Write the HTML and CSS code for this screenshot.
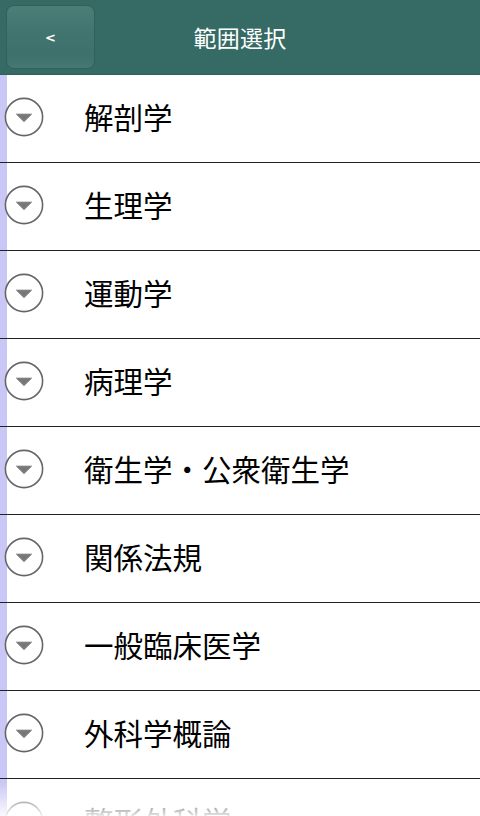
FILE: index.html
```html
<!DOCTYPE html>
<html lang="ja">
<head>
<meta charset="utf-8">
<title>範囲選択</title>
<link rel="stylesheet" href="styles.css">
</head>
<body>
<header class="topbar">
  <button class="back">&lt;</button>
  <h1 class="title">範囲選択</h1>
  <span></span>
</header>
<ul class="list">
  <li class="row"><svg class="ico" viewBox="0 0 40 40" width="40" height="40"><circle cx="20" cy="20" r="18.6" fill="#fff" stroke="#666" stroke-width="1.6"/><path d="M12.5 17.2 H27.5 L20 24.6 Z" fill="#777" stroke="#777" stroke-width="1" stroke-linejoin="round"/></svg><span class="label">解剖学</span></li>
  <li class="row"><svg class="ico" viewBox="0 0 40 40" width="40" height="40"><circle cx="20" cy="20" r="18.6" fill="#fff" stroke="#666" stroke-width="1.6"/><path d="M12.5 17.2 H27.5 L20 24.6 Z" fill="#777" stroke="#777" stroke-width="1" stroke-linejoin="round"/></svg><span class="label">生理学</span></li>
  <li class="row"><svg class="ico" viewBox="0 0 40 40" width="40" height="40"><circle cx="20" cy="20" r="18.6" fill="#fff" stroke="#666" stroke-width="1.6"/><path d="M12.5 17.2 H27.5 L20 24.6 Z" fill="#777" stroke="#777" stroke-width="1" stroke-linejoin="round"/></svg><span class="label">運動学</span></li>
  <li class="row"><svg class="ico" viewBox="0 0 40 40" width="40" height="40"><circle cx="20" cy="20" r="18.6" fill="#fff" stroke="#666" stroke-width="1.6"/><path d="M12.5 17.2 H27.5 L20 24.6 Z" fill="#777" stroke="#777" stroke-width="1" stroke-linejoin="round"/></svg><span class="label">病理学</span></li>
  <li class="row"><svg class="ico" viewBox="0 0 40 40" width="40" height="40"><circle cx="20" cy="20" r="18.6" fill="#fff" stroke="#666" stroke-width="1.6"/><path d="M12.5 17.2 H27.5 L20 24.6 Z" fill="#777" stroke="#777" stroke-width="1" stroke-linejoin="round"/></svg><span class="label">衛生学・公衆衛生学</span></li>
  <li class="row"><svg class="ico" viewBox="0 0 40 40" width="40" height="40"><circle cx="20" cy="20" r="18.6" fill="#fff" stroke="#666" stroke-width="1.6"/><path d="M12.5 17.2 H27.5 L20 24.6 Z" fill="#777" stroke="#777" stroke-width="1" stroke-linejoin="round"/></svg><span class="label">関係法規</span></li>
  <li class="row"><svg class="ico" viewBox="0 0 40 40" width="40" height="40"><circle cx="20" cy="20" r="18.6" fill="#fff" stroke="#666" stroke-width="1.6"/><path d="M12.5 17.2 H27.5 L20 24.6 Z" fill="#777" stroke="#777" stroke-width="1" stroke-linejoin="round"/></svg><span class="label">一般臨床医学</span></li>
  <li class="row"><svg class="ico" viewBox="0 0 40 40" width="40" height="40"><circle cx="20" cy="20" r="18.6" fill="#fff" stroke="#666" stroke-width="1.6"/><path d="M12.5 17.2 H27.5 L20 24.6 Z" fill="#777" stroke="#777" stroke-width="1" stroke-linejoin="round"/></svg><span class="label">外科学概論</span></li>
  <li class="row"><svg class="ico" viewBox="0 0 40 40" width="40" height="40"><circle cx="20" cy="20" r="18.6" fill="#fff" stroke="#666" stroke-width="1.6"/><path d="M12.5 17.2 H27.5 L20 24.6 Z" fill="#777" stroke="#777" stroke-width="1" stroke-linejoin="round"/></svg><span class="label">整形外科学</span></li>
</ul>
<div class="fade"></div>
</body>
</html>
```
FILE: styles.css
```css
html, body {
  margin: 0;
  padding: 0;
  height: 816px;
  overflow: hidden;
}
body {
  font-family: "Noto Sans CJK JP", "Noto Sans", sans-serif;
  background: #fff;
  color: #000;
}
.topbar {
  box-sizing: border-box;
  height: 75px;
  padding: 5px 6px 0 6px;
  background: #366a64;
  border-bottom: 1px solid #2f605a;
  display: grid;
  grid-template-columns: 1fr auto 1fr;
  align-items: start;
}
.back {
  width: 89px;
  height: 64px;
  border-radius: 8px;
  border: 1px solid #2f625c;
  background: linear-gradient(#4c7e78, #41746e 45%, #3e716b 80%, #457872);
  color: #fff;
  font-family: "DejaVu Sans", sans-serif;
  font-size: 13px;
  font-weight: bold;
  padding: 0;
  display: flex;
  align-items: center;
  justify-content: center;
  justify-self: start;
}
.title {
  margin: 0;
  height: 64px;
  display: flex;
  align-items: center;
  color: #fff;
  font-size: 23px;
  font-weight: normal;
  letter-spacing: 0.3px;
}
.list {
  list-style: none;
  margin: 0;
  padding: 0;
  background: linear-gradient(to right, #c9c7f5 0, #c9c7f5 7px, #fff 7px);
}
.row {
  height: 87px;
  border-bottom: 1px solid #222;
  display: flex;
  align-items: center;
  padding-left: 4px;
  box-sizing: content-box;
}
.ico {
  display: block;
  flex: none;
  width: 40px;
  height: 40px;
  margin-top: -3px;
}
.label {
  margin-left: 40px;
  font-size: 29.5px;
  line-height: 1;
  margin-top: -4px;
}
.fade {
  position: fixed;
  left: 0;
  right: 0;
  bottom: 0;
  height: 34px;
  background: linear-gradient(rgba(255,255,255,0), rgba(255,255,255,0.9));
  pointer-events: none;
}
```
